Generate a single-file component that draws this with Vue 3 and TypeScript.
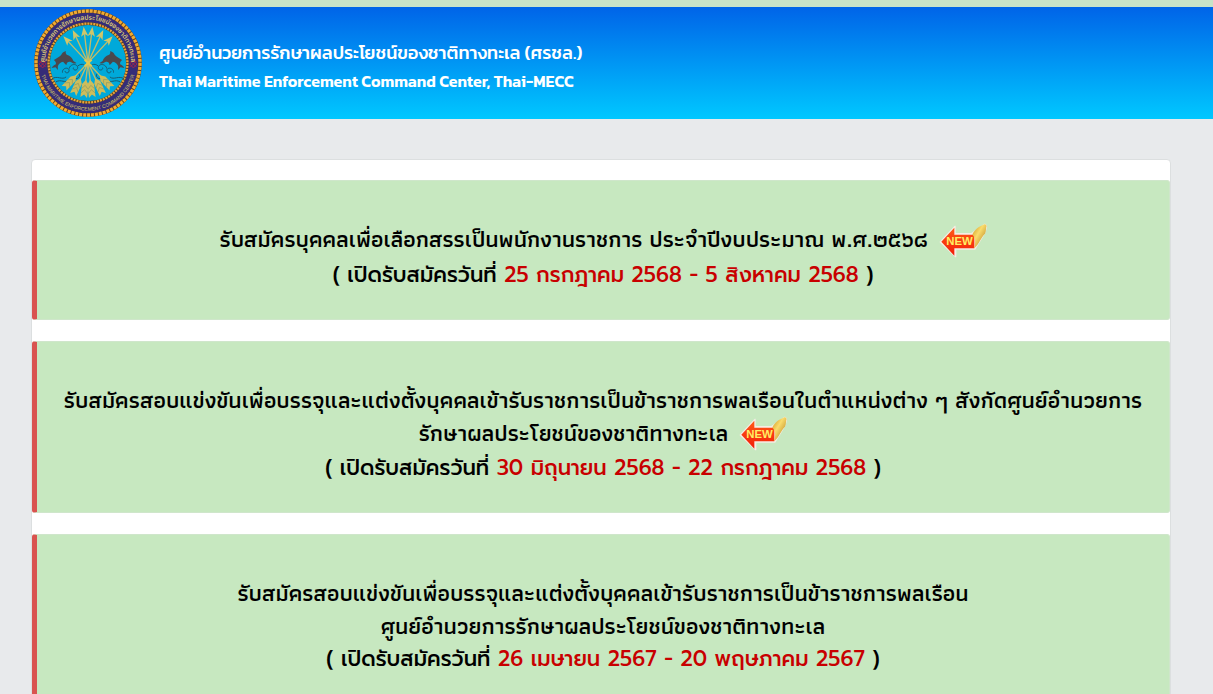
<script setup lang="ts">
interface Notice {
  title: string[]
  isNew: boolean
  period: string
}

const notices: Notice[] = [
  {
    title: ['รับสมัครบุคคลเพื่อเลือกสรรเป็นพนักงานราชการ ประจำปีงบประมาณ พ.ศ.๒๕๖๘'],
    isNew: true,
    period: '25 กรกฎาคม 2568 - 5 สิงหาคม 2568',
  },
  {
    title: [
      'รับสมัครสอบแข่งขันเพื่อบรรจุและแต่งตั้งบุคคลเข้ารับราชการเป็นข้าราชการพลเรือนในตำแหน่งต่าง ๆ สังกัดศูนย์อำนวยการรักษาผลประโยชน์ของชาติทางทะเล',
    ],
    isNew: true,
    period: '30 มิถุนายน 2568 - 22 กรกฎาคม 2568',
  },
  {
    title: [
      'รับสมัครสอบแข่งขันเพื่อบรรจุและแต่งตั้งบุคคลเข้ารับราชการเป็นข้าราชการพลเรือน',
      'ศูนย์อำนวยการรักษาผลประโยชน์ของชาติทางทะเล',
    ],
    isNew: false,
    period: '26 เมษายน 2567 - 20 พฤษภาคม 2567',
  },
]

const arrows = [-43, -25, -7, 7, 25, 43]
</script>

<template>
  <div class="page">
    <header class="banner">
      <svg class="seal" viewBox="0 0 326 326" role="img" aria-label="Thai-MECC">
        <defs>
          <path id="ring-top" d="M36 190 A130 130 0 1 1 290 190" />
          <path id="ring-bottom" d="M20 186 A145 145 0 0 0 306 186" />
          <g id="arrow">
            <path d="M0 96 V-90" stroke="#c3bc68" stroke-width="4" />
            <path d="M0 -109 L11 -80 L0 -87 L-11 -80 Z" fill="#cfc66a" />
            <path d="M0 52 L-10 66 V106 L0 97 L10 106 V66 Z" fill="#cdbd5c" />
            <path d="M-10 80 L0 69 L10 80 M-10 93 L0 82 L10 93" fill="none" stroke="#8f9a62" stroke-width="2" />
          </g>
          <path
            id="dolphin"
            d="M60 154 C66 150 76 146 82 139 C84 133 89 130 96 127 C95 132 96 136 99 138 C110 141 116 149 119 157 L128 163 C121 167 116 163 111 160 C104 158 99 160 98 169 C93 165 90 162 88 159 C80 160 75 166 72 172 L72 184 L65 176 L53 178 C57 172 62 169 66 167 C67 162 65 158 60 154 Z"
            fill="#4a484d"
          />
          <g id="wave" fill="none" stroke="#1a5a70" stroke-width="3">
            <path d="M86 192 C84 178 104 174 106 185 C107 195 93 195 94 187 M106 180 C110 164 131 164 132 177 C131 188 116 185 119 177 M132 172 C145 162 157 168 155 180" />
            <path d="M54 211 C70 199 85 216 97 205 M66 220 C83 210 92 227 110 213 M122 209 C133 214 144 201 133 193" />
          </g>
        </defs>
        <circle cx="163" cy="163" r="154" fill="#352c78" />
        <circle cx="163" cy="163" r="157" fill="none" stroke="#65451f" stroke-width="11" />
        <circle cx="163" cy="163" r="157" fill="none" stroke="#f1aa31" stroke-width="10" stroke-dasharray="9 3" />
        <circle cx="163" cy="163" r="118" fill="#00a9da" />
        <circle cx="163" cy="163" r="119" fill="none" stroke="#55401f" stroke-width="8" />
        <circle cx="163" cy="163" r="119" fill="none" stroke="#e9a33a" stroke-width="7" stroke-dasharray="6 3" />
        <use href="#wave" />
        <use href="#wave" transform="translate(326 0) scale(-1 1)" />
        <use v-for="angle in arrows" :key="angle" href="#arrow" :transform="`translate(163 162) rotate(${angle})`" />
        <path d="M153 153 L174 173 M174 153 L153 173" stroke="#e1c94f" stroke-width="6" />
        <use href="#dolphin" />
        <use href="#dolphin" transform="translate(326 0) scale(-1 1)" />
        <g fill="#352c78" stroke="#9f234e" stroke-width="3">
          <path d="M26 154 L37 166 L26 178 L15 166 Z M300 154 L311 166 L300 178 L289 166 Z" />
          <path d="M17 157 L35 175 M35 157 L17 175 M291 157 L309 175 M309 157 L291 175" />
        </g>
        <text class="seal-thai"><textPath href="#ring-top" startOffset="50%" text-anchor="middle">ศูนย์อำนวยการรักษาผลประโยชน์ของชาติทางทะเล</textPath></text>
        <text class="seal-latin"><textPath href="#ring-bottom" startOffset="50%" text-anchor="middle">THAI MARITIME ENFORCEMENT COMMAND CENTER</textPath></text>
      </svg>
      <div class="names">
        <div class="name-thai">ศูนย์อำนวยการรักษาผลประโยชน์ของชาติทางทะเล (ศรชล.)</div>
        <div class="name-latin">Thai Maritime Enforcement Command Center, Thai-MECC</div>
      </div>
    </header>

    <main class="card">
      <section v-for="notice in notices" :key="notice.period" class="notice">
        <div v-for="line in notice.title" :key="line" class="title">
          {{ line }}
          <svg v-if="notice.isNew" class="new" viewBox="0 0 144 108" role="img" aria-label="NEW">
            <defs>
              <linearGradient id="gold" x1="0" y1="0" x2="1" y2="1">
                <stop offset="0" stop-color="#c98d16" />
                <stop offset="0.400" stop-color="#f9dc6c" />
                <stop offset="1" stop-color="#a9700d" />
              </linearGradient>
              <linearGradient id="red" x1="0" y1="0" x2="0" y2="1">
                <stop offset="0" stop-color="#ff5a18" />
                <stop offset="1" stop-color="#f21c08" />
              </linearGradient>
            </defs>
            <path d="M4 57 L48 10 V32 H98 L138 4 L143 10 L137 30 L108 78 H50 V101 Z" fill="#f6ece4" stroke="#f6ece4" stroke-width="4" stroke-linejoin="round" />
            <path d="M7 56 L46 14 V35 H106 V76 H46 V98 Z" fill="url(#red)" />
            <path d="M100 35 C106 20 120 10 138 3 L143 8 C140 16 142 24 138 32 C126 42 120 66 104 76 C110 63 111 45 100 35 Z" fill="url(#gold)" />
            <text class="new-text" x="22" y="66">NEW</text>
          </svg>
        </div>
        <div class="dates">( เปิดรับสมัครวันที่ <span class="period">{{ notice.period }}</span> )</div>
      </section>
    </main>
  </div>
</template>

<style>
body {
  margin: 0;
  background: #e8eaec;
  overflow: hidden;
}
</style>

<style scoped>
.page {
  border-top: 7px solid #c8e3c8;
  font-family: Athiti, "Noto Sans Thai", "Noto Sans", sans-serif;
}

.banner {
  display: flex;
  align-items: center;
  gap: 17px;
  min-height: 112px;
  padding-left: 34px;
  background: linear-gradient(#0064e8, #00c8ff);
}

.seal {
  width: 108px;
  height: 108px;
  flex: none;
}

.seal-thai {
  fill: #e2d576;
  font-size: 21px;
  font-weight: 600;
}

.seal-latin {
  fill: #d5c765;
  font-family: "Liberation Sans", sans-serif;
  font-size: 15px;
}

.names {
  padding-top: 8px;
  color: #fff;
  font-family: Kanit, "Noto Sans Thai", "Noto Sans", sans-serif;
  line-height: 28px;
}

.name-thai {
  font-size: 18px;
  font-weight: 500;
}

.name-latin {
  font-size: 16px;
  font-weight: 600;
}

.card {
  display: flex;
  flex-direction: column;
  gap: 21px;
  margin: 40px 42px 0 31px;
  padding: 20px 0;
  border: 1px solid #dcdfe0;
  border-radius: 4px;
  background: #fff;
}

.notice {
  padding: 42px 20px 27px;
  border: 1px solid #cfe6cb;
  border-left: 5px solid #d9534f;
  border-radius: 3px;
  background: #c7e8c0;
  color: #000;
  line-height: 33px;
  text-align: center;
}

.title {
  font-size: 23px;
  font-weight: 600;
}

.dates {
  font-family: Prompt, "Noto Sans Thai", "Noto Sans", sans-serif;
  font-size: 21px;
  font-weight: 500;
}

.period {
  color: #c80000;
}

.new {
  width: 48px;
  height: 36px;
  margin: -2px 0 0 4px;
  vertical-align: middle;
}

.new-text {
  fill: #ffee63;
  font-family: "Liberation Sans", sans-serif;
  font-size: 34px;
  font-weight: 700;
}
</style>
